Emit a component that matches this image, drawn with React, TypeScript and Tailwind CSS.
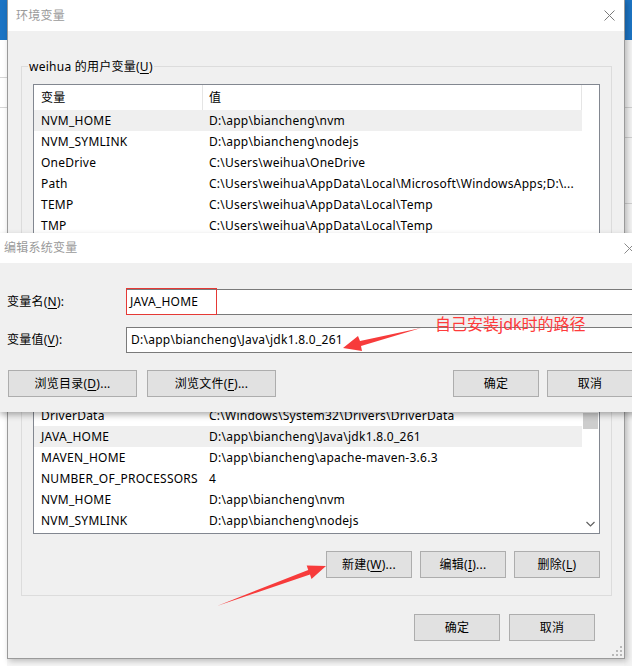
import React from "react";

function U({ c }: { c: string }) {
  return <span className="underline underline-offset-[2px] decoration-1">{c}</span>;
}

function Btn({ children, w }: { children: React.ReactNode; w: string }) {
  return (
    <div
      className={
        "flex h-[27px] shrink-0 items-center justify-center border border-[#adadad] bg-[#e1e1e1] text-[12px] text-black " +
        w
      }
    >
      {children}
    </div>
  );
}

function Row({ name, value, sel }: { name: string; value: string; sel?: boolean }) {
  return (
    <div className={"flex h-[21px] shrink-0 items-center " + (sel ? "bg-[#efefef]" : "bg-white")}>
      <div className="w-[168px] shrink-0 whitespace-nowrap pl-[7px]">{name}</div>
      <div className="whitespace-nowrap pl-[7px]">{value}</div>
    </div>
  );
}

function Header() {
  return (
    <div className="flex h-[25px] shrink-0 bg-white">
      <div className="flex w-[169px] shrink-0 items-center border-r border-[#e5e5e5] pl-[7px]">变量</div>
      <div className="flex flex-1 items-center border-r border-[#e5e5e5] pl-[6px]">值</div>
    </div>
  );
}

function CloseX({ color }: { color: string }) {
  return (
    <svg width="11" height="11" viewBox="0 0 11 11" className="shrink-0">
      <path d="M0.5 0.5 L10.5 10.5 M10.5 0.5 L0.5 10.5" stroke={color} strokeWidth="1" fill="none" />
    </svg>
  );
}

const userVars = [
  ["NVM_HOME", "D:\\app\\biancheng\\nvm"],
  ["NVM_SYMLINK", "D:\\app\\biancheng\\nodejs"],
  ["OneDrive", "C:\\Users\\weihua\\OneDrive"],
  ["Path", "C:\\Users\\weihua\\AppData\\Local\\Microsoft\\WindowsApps;D:\\..."],
  ["TEMP", "C:\\Users\\weihua\\AppData\\Local\\Temp"],
  ["TMP", "C:\\Users\\weihua\\AppData\\Local\\Temp"],
];

const sysVars = [
  ["ComSpec", "C:\\Windows\\system32\\cmd.exe"],
  ["DriverData", "C:\\Windows\\System32\\Drivers\\DriverData"],
  ["JAVA_HOME", "D:\\app\\biancheng\\Java\\jdk1.8.0_261"],
  ["MAVEN_HOME", "D:\\app\\biancheng\\apache-maven-3.6.3"],
  ["NUMBER_OF_PROCESSORS", "4"],
  ["NVM_HOME", "D:\\app\\biancheng\\nvm"],
  ["NVM_SYMLINK", "D:\\app\\biancheng\\nodejs"],
];

export default function App() {
  return (
    <div className="relative h-[666px] w-[632px] overflow-hidden bg-[#f6f6f6] font-['Noto_Sans','Noto_Sans_CJK_SC',sans-serif] text-[12px] leading-[16px] tracking-[0.25px] text-black">
      {/* background windows peeking out */}
      <div className="absolute left-0 top-0 flex h-full w-[7px] flex-col bg-white">
        <div className="h-[40px] bg-[#1c74c4]" />
        <div className="mt-[37px] h-px bg-[#d6d6d6]" />
        <div className="mt-[29px] h-px bg-[#d6d6d6]" />
      </div>
      <div className="absolute right-0 top-0 flex h-full w-[8px] flex-col bg-[#f3f3f3]">
        <div className="h-[40px] bg-[#1c74c4]" />
        <div className="mt-[67px] h-px bg-[#d0d0d0]" />
        <div className="mt-[29px] h-px bg-[#d0d0d0]" />
        <div className="mt-[65px] h-px bg-[#d0d0d0]" />
        <div className="mt-[79px] h-px bg-[#d0d0d0]" />
      </div>

      {/* main window: 环境变量 */}
      <div className="absolute left-[7px] top-[-1px] flex h-[660px] w-[618px] flex-col border border-[#9a9a9a] bg-[#f0f0f0] shadow-[2px_2px_6px_rgba(0,0,0,0.25)]">
        <div className="flex h-[31px] shrink-0 items-center justify-between bg-white pl-[8px] pr-[9px]">
          <span className="text-[#9a9a9a]">环境变量</span>
          <CloseX color="#7a7a7a" />
        </div>
        <div className="relative flex flex-1 flex-col">
          {/* user variables group */}
          <div className="relative ml-[13px] mt-[35px] flex h-[220px] w-[591px] shrink-0 flex-col border border-[#dcdcdc]">
            <div className="absolute -top-[9px] left-[6px] bg-[#f0f0f0] px-[1px] leading-[17px]">
              weihua 的用户变量(<U c="U" />)
            </div>
            <div className="ml-[11px] mt-[17px] flex h-[190px] w-[567px] shrink-0 overflow-hidden border border-[#828790] bg-white">
              <div className="flex flex-1 flex-col">
                <Header />
                {userVars.map((r, i) => (
                  <Row key={r[0]} name={r[0]} value={r[1]} sel={i === 0} />
                ))}
              </div>
              <div className="w-[17px] shrink-0 bg-white" />
            </div>
          </div>

          {/* system variables group */}
          <div className="ml-[13px] mt-[14px] flex h-[296px] w-[591px] shrink-0 flex-col border border-[#dcdcdc]">
            <div className="ml-[11px] mt-[17px] flex h-[216px] w-[567px] shrink-0 overflow-hidden border border-[#828790] bg-white">
              <div className="flex flex-1 flex-col overflow-hidden">
                <Header />
                <div className="flex flex-1 flex-col justify-end overflow-hidden pb-[2px]">
                  {sysVars.map((r) => (
                    <Row key={r[0]} name={r[0]} value={r[1]} sel={r[0] === "JAVA_HOME"} />
                  ))}
                </div>
              </div>
              <div className="flex w-[17px] shrink-0 flex-col bg-white">
                <div className="h-[17px] shrink-0" />
                <div className="h-[77px] shrink-0" />
                <div className="mx-[1px] h-[16px] shrink-0 bg-[#cdcdcd]" />
                <div className="flex-1" />
                <div className="flex h-[17px] shrink-0 items-center justify-center pb-[2px]">
                  <svg width="9" height="6" viewBox="0 0 9 6">
                    <path d="M0.5 1 L4.5 5 L8.5 1" stroke="#606060" strokeWidth="1.2" fill="none" />
                  </svg>
                </div>
              </div>
            </div>
            <div className="mt-[17px] flex justify-end gap-[8px] pr-[11px]">
              <Btn w="w-[86px]">
                新建(<U c="W" />)...
              </Btn>
              <Btn w="w-[86px]">
                编辑(<U c="I" />)...
              </Btn>
              <Btn w="w-[86px]">
                删除(<U c="L" />)
              </Btn>
            </div>
          </div>

          {/* OK / Cancel */}
          <div className="mt-[18px] flex justify-end gap-[9px] pr-[29px]">
            <Btn w="w-[86px]">确定</Btn>
            <Btn w="w-[86px]">取消</Btn>
          </div>

          {/* resize grip */}
          <svg width="10" height="10" viewBox="0 0 10 10" className="absolute bottom-[2px] right-[2px]">
            <rect x="8" y="0" width="2" height="2" fill="#b8b8b8" />
            <rect x="4" y="4" width="2" height="2" fill="#b8b8b8" />
            <rect x="8" y="4" width="2" height="2" fill="#b8b8b8" />
            <rect x="0" y="8" width="2" height="2" fill="#b8b8b8" />
            <rect x="4" y="8" width="2" height="2" fill="#b8b8b8" />
            <rect x="8" y="8" width="2" height="2" fill="#b8b8b8" />
          </svg>
        </div>
      </div>

      {/* edit dialog: 编辑系统变量 */}
      <div className="absolute left-0 top-[233px] flex w-[645px] flex-col bg-[#f0f0f0] shadow-[0_3px_6px_rgba(0,0,0,0.3)]">
        <div className="flex h-[30px] items-center justify-between bg-white pl-[4px] pr-[10px]">
          <span className="text-[#9a9a9a]">编辑系统变量</span>
          <CloseX color="#8a8a8a" />
        </div>
        <div className="flex flex-col pb-[15px] pt-[26px]">
          <div className="flex h-[26px] items-center">
            <div className="w-[126px] shrink-0 pl-[7px]">
              变量名(<U c="N" />):
            </div>
            <div className="flex h-[26px] flex-1 items-center border border-[#7a7a7a] bg-white pl-[3px]">
              JAVA_HOME
            </div>
          </div>
          <div className="mt-[12px] flex h-[26px] items-center">
            <div className="w-[126px] shrink-0 pl-[7px]">
              变量值(<U c="V" />):
            </div>
            <div className="flex h-[26px] flex-1 items-center border border-[#7a7a7a] bg-white pl-[4px]">
              D:\app\biancheng\Java\jdk1.8.0_261
            </div>
          </div>
          <div className="mt-[17px] flex justify-between pl-[8px] pr-[12px]">
            <div className="flex gap-[10px]">
              <Btn w="w-[129px]">
                浏览目录(<U c="D" />)...
              </Btn>
              <Btn w="w-[129px]">
                浏览文件(<U c="F" />)...
              </Btn>
            </div>
            <div className="flex gap-[8px]">
              <Btn w="w-[86px]">确定</Btn>
              <Btn w="w-[86px]">取消</Btn>
            </div>
          </div>
        </div>
      </div>

      {/* annotations */}
      <svg width="632" height="666" viewBox="0 0 632 666" className="pointer-events-none absolute left-0 top-0">
        <rect x="126.5" y="288.5" width="90" height="26" stroke="#e53935" strokeWidth="1" fill="none" />
        <polygon
          points="343,348 362,351 361,346 421,328 360,341 358,336"
          fill="#f73b3b"
        />
        <polygon
          points="326,566 311.5,579 310,574.6 217,606 308.2,569.9 306.7,565.6"
          fill="#f73b3b"
        />
      </svg>
      <div className="pointer-events-none absolute left-[435px] top-[314px] whitespace-nowrap text-[16px] leading-[20px] tracking-normal text-[#ff3b3b]">
        自己安装jdk时的路径
      </div>
    </div>
  );
}
